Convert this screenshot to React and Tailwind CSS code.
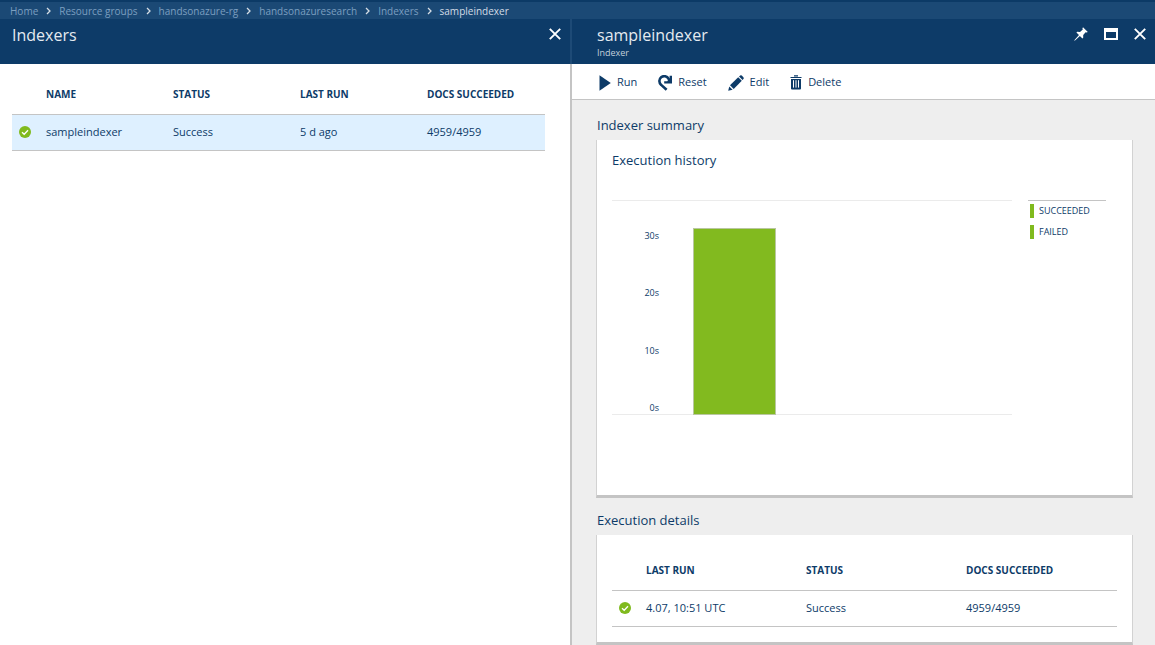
const NAVY = '#0d3b68';

function CloseIcon() {
  return (
    <svg width="12" height="12" viewBox="0 0 12 12" aria-hidden="true">
      <path d="M0.8 0.8 11.2 11.2M11.2 0.8 0.8 11.2" stroke="currentColor" strokeWidth="1.9" fill="none" />
    </svg>
  );
}

function MaximizeIcon() {
  return (
    <svg width="14" height="12" viewBox="0 0 14 12" aria-hidden="true">
      <path d="M0 0h14v12H0zM2 4v6h10V4z" fill="currentColor" fillRule="evenodd" />
    </svg>
  );
}

function PinIcon() {
  return (
    <svg width="14" height="14" viewBox="0 0 14 14" aria-hidden="true">
      <path
        d="M9 0.2 13.8 5 12.6 5.6 11.6 5.3 9.2 8.1 9.2 10.8 8.4 11.4 5.9 9.1 1 13.5 0.3 13.7 0.5 13 5 8.1 2.4 5.6 3.2 4.8 6 4.9 8.8 2.4 8.4 1.4z"
        fill="currentColor"
      />
    </svg>
  );
}

function PlayIcon() {
  return (
    <svg width="12" height="16" viewBox="0 0 12 16" aria-hidden="true">
      <path d="M0.5 0.2 11.8 8 0.5 15.8z" fill={NAVY} />
    </svg>
  );
}

function ResetIcon() {
  return (
    <svg width="14" height="16" viewBox="0 0 14 16" aria-hidden="true">
      <path d="M8.6 14.8 3.2 9.9A4.9 4.9 0 1 1 10.6 3.8L11.4 5.6" fill="none" stroke={NAVY} strokeWidth="2.6" />
      <path d="M14 0.8V8.6H6.2V6.2H9.2L11.6 3.6V0.8z" fill={NAVY} />
    </svg>
  );
}

function EditIcon() {
  return (
    <svg width="16" height="16" viewBox="0 0 16 16" aria-hidden="true">
      <path d="M0.2 15.8 1.3 11.4 4.6 14.7z" fill={NAVY} />
      <path d="M2 10.3 10.2 2.2 13.8 5.8 5.7 14z" fill={NAVY} />
      <path d="M11 1.4 12.2 0.4Q13 0 13.8 0.6L15.4 2.2Q16 3 15.6 3.8L14.6 5z" fill={NAVY} />
    </svg>
  );
}

function TrashIcon() {
  return (
    <svg width="12" height="15" viewBox="0 0 12 15" aria-hidden="true">
      <path d="M0.5 2.5h11M4 0.8h4" stroke={NAVY} strokeWidth="1.2" />
      <path d="M1 4h10v9.6a1 1 0 0 1-1 1H2a1 1 0 0 1-1-1z" fill={NAVY} />
      <path d="M3.5 5.2v7.4M6 5.2v7.4M8.5 5.2v7.4" stroke="#fff" strokeWidth="1" />
    </svg>
  );
}

function SuccessIcon() {
  return (
    <svg width="12" height="12" viewBox="0 0 12 12" className="mx-auto block" role="img" aria-label="Succeeded">
      <circle cx="6" cy="6" r="6" fill="#80ba1e" />
      <path d="M3 6.2 5.2 8.3 9 4.2" fill="none" stroke="#fff" strokeWidth="1.3" />
    </svg>
  );
}

const crumbs = ['Home', 'Resource groups', 'handsonazure-rg', 'handsonazuresearch', 'Indexers', 'sampleindexer'];

function Breadcrumbs() {
  return (
    <nav aria-label="Breadcrumb" className="border-t-2 border-[#0c3a66] bg-[#1b4975] px-[10px]">
      <ol className="flex h-[17px] items-center text-[10px] leading-4 whitespace-nowrap">
        {crumbs.map((crumb, i) => (
          <li key={crumb} className="flex items-center">
            {i > 0 && (
              <svg width="5" height="8" viewBox="0 0 5 8" className="mx-2" aria-hidden="true">
                <path d="M1 1 4 4 1 7" fill="none" stroke="#d5dde5" strokeWidth="1.3" />
              </svg>
            )}
            <a href="#" className={i === crumbs.length - 1 ? 'text-[#d3dce5]' : 'text-[#7c9fc0]'}>
              {crumb}
            </a>
          </li>
        ))}
      </ol>
    </nav>
  );
}

function StatusTable({ label, columns, columnWidth, cells, selected }) {
  return (
    <table aria-label={label} className="w-full table-fixed border-collapse text-left">
      <thead>
        <tr className="h-[38px] border-b border-[#c4c4c4] text-[10px]">
          <td className="w-[34px]" />
          {columns.map((c, i) => (
            <th key={c} scope="col" className={i < columns.length - 1 ? `font-bold ${columnWidth}` : 'font-bold'}>
              {c}
            </th>
          ))}
        </tr>
      </thead>
      <tbody>
        <tr className={selected ? 'h-9 border-b border-[#c4c4c4] bg-[#def0ff]' : 'h-9 border-b border-[#c4c4c4]'}>
          <td className="pr-2">
            <SuccessIcon />
          </td>
          {cells.map((c) => (
            <td key={c} className="text-[11px]">
              {c}
            </td>
          ))}
        </tr>
      </tbody>
    </table>
  );
}

function IndexersBlade() {
  return (
    <section className="flex flex-col">
      <header className="flex h-[45px] justify-between border-r-2 border-[#1d4a76] bg-[#0d3b68] pt-1 pr-[9px] pl-3 text-[#e4eaf0]">
        <h1 className="text-[16px] leading-6">Indexers</h1>
        <button type="button" aria-label="Close Indexers" className="flex h-[22px] items-center text-white">
          <CloseIcon />
        </button>
      </header>
      <div className="flex-1 border-r-2 border-[#c4c4c4] bg-white pt-3 pr-[25px] pl-3">
        <StatusTable
          label="Indexers"
          columns={['NAME', 'STATUS', 'LAST RUN', 'DOCS SUCCEEDED']}
          columnWidth="w-[127px]"
          cells={['sampleindexer', 'Success', '5 d ago', '4959/4959']}
          selected
        />
      </div>
    </section>
  );
}

const ticks = ['30s', '20s', '10s', '0s'];

function ExecutionHistory() {
  return (
    <div className="h-[358px] border-x border-b-3 border-x-[#d2d2d2] border-b-[#c4c4c4] bg-white px-[15px] pt-2">
      <h3 className="text-[13px] leading-6">Execution history</h3>
      <div className="mt-7 flex items-start gap-4">
        <div className="flex h-[215px] max-w-[400px] flex-1 items-end border-y border-[#ebebeb]">
          <div className="flex h-[184px] w-[47px] flex-col justify-between text-right text-[9px] leading-3">
            {ticks.map((t) => (
              <span key={t}>{t}</span>
            ))}
          </div>
          <div className="-mb-px ml-[34px] h-[187px] w-[83px] border border-[#b9c7a0] bg-[#82ba1f]" />
        </div>
        <ul className="w-[78px] border-t border-[#c4c4c4] pt-[3px] text-[9px]">
          {['SUCCEEDED', 'FAILED'].map((s) => (
            <li key={s} className="mb-[7px] flex h-[14px] items-center gap-[5px] pl-[2px]">
              <span className="h-[14px] w-1 bg-[#80ba1e]" />
              {s}
            </li>
          ))}
        </ul>
      </div>
    </div>
  );
}

function ToolButton({ icon, label }) {
  return (
    <button type="button" className="flex items-center gap-[6px]">
      {icon}
      {label}
    </button>
  );
}

function IndexerBlade() {
  return (
    <section className="flex flex-col bg-[#eee]">
      <header className="flex h-[45px] justify-between bg-[#0d3b68] pt-1 pr-[9px] pl-[25px] text-[#e4eaf0]">
        <div>
          <h1 className="text-[16px] leading-6">sampleindexer</h1>
          <p className="text-[9px] leading-3 text-[#c3d0dc]">Indexer</p>
        </div>
        <div className="flex h-[22px] items-center gap-4 text-white">
          <button type="button" aria-label="Pin">
            <PinIcon />
          </button>
          <button type="button" aria-label="Maximize">
            <MaximizeIcon />
          </button>
          <button type="button" aria-label="Close sampleindexer">
            <CloseIcon />
          </button>
        </div>
      </header>
      <div className="flex h-9 items-center gap-[21px] border-b border-[#c4c4c4] bg-white pt-[2px] pl-[27px] text-[11px]">
        <ToolButton icon={<PlayIcon />} label="Run" />
        <ToolButton icon={<ResetIcon />} label="Reset" />
        <ToolButton icon={<EditIcon />} label="Edit" />
        <ToolButton icon={<TrashIcon />} label="Delete" />
      </div>
      <div className="pt-[13px] pr-[22px] pl-6">
        <h2 className="mb-[3px] pl-px text-[13px] leading-6">Indexer summary</h2>
        <ExecutionHistory />
        <h2 className="mt-[10px] mb-[3px] pl-px text-[13px] leading-6">Execution details</h2>
        <div className="border-x border-b-3 border-x-[#d2d2d2] border-b-[#c4c4c4] bg-white px-[15px] pt-[17px] pb-[15px]">
          <StatusTable
            label="Execution details"
            columns={['LAST RUN', 'STATUS', 'DOCS SUCCEEDED']}
            columnWidth="w-[160px]"
            cells={['4.07, 10:51 UTC', 'Success', '4959/4959']}
          />
        </div>
      </div>
    </section>
  );
}

export default function App() {
  return (
    <div className="flex min-h-screen flex-col bg-white font-['Open_Sans','Noto_Sans',sans-serif] text-[#0d3b68]">
      <Breadcrumbs />
      <main className="grid flex-1 grid-cols-[572fr_583fr]">
        <IndexersBlade />
        <IndexerBlade />
      </main>
    </div>
  );
}
